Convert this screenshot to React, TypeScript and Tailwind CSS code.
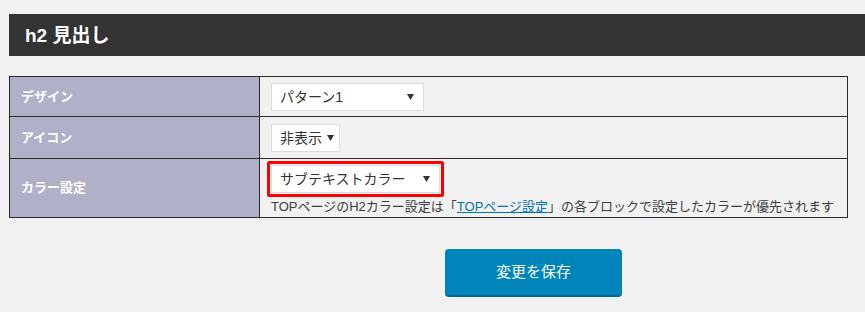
import React from "react";

interface FieldRow {
  label: string;
  height: string;
}

function Arrow() {
  return (
    <svg width="7" height="6" viewBox="0 0 7 6" className="shrink-0">
      <path d="M0 0 H7 L3.5 6 Z" fill="#333" />
    </svg>
  );
}

function FakeSelect({ value, className }: { value: string; className: string }) {
  return (
    <div
      className={`flex items-center justify-between h-[28px] bg-white border border-[#dcdcdc] pl-[8px] text-[14px] text-[#333] whitespace-nowrap ${className}`}
    >
      <span className="leading-none">{value}</span>
      <Arrow />
    </div>
  );
}

export default function App() {
  const rows: FieldRow[] = [
    { label: "デザイン", height: "h-[39px]" },
    { label: "アイコン", height: "h-[42px]" },
    { label: "カラー設定", height: "h-[59px]" },
  ];

  return (
    <div className="w-[865px] h-[312px] bg-[#f1f1f1] overflow-hidden pt-[14px] font-['Liberation_Sans','Noto_Sans_CJK_JP',sans-serif]">
      {/* heading bar */}
      <div className="ml-[9px] h-[42px] bg-[#333] flex items-center pl-[16px]">
        <h2 className="text-white font-bold text-[19px] leading-none">h2 見出し</h2>
      </div>

      {/* settings table */}
      <div className="ml-[9px] w-[839px] mt-[20px] border border-[#2b2b2b]">
        {rows.map((row, i) => (
          <div
            key={i}
            className={`flex ${row.height} ${i > 0 ? "border-t border-[#2b2b2b]" : ""}`}
          >
            <div className="w-[250px] bg-[#b0b0c8] border-r border-[#2b2b2b] flex items-center pl-[11px] text-white font-bold text-[13px]">
              {row.label}
            </div>
            <div className="flex-1 pl-[11px] flex flex-col justify-center">
              {i === 0 && <FakeSelect value="パターン1" className="w-[153px] pr-[9px]" />}
              {i === 1 && <FakeSelect value="非表示" className="w-[69px] pr-[6px] gap-[5px]" />}
              {i === 2 && (
                <div className="flex flex-col items-start -ml-[4px]">
                  <div className="border-[3px] border-[#f00] rounded-[2px] p-[1px]">
                    <FakeSelect value="サブテキストカラー" className="w-[169px] h-[26px] pr-[9px]" />
                  </div>
                  <p className="text-[13px] text-[#3c3c3c] leading-[18px] ml-[4px] mt-[1px]">
                    TOPページのH2カラー設定は「
                    <a className="text-[#0073aa] underline">TOPページ設定</a>
                    」の各ブロックで設定したカラーが優先されます
                  </p>
                </div>
              )}
            </div>
          </div>
        ))}
      </div>

      {/* submit */}
      <div className="ml-[445px] mt-[31px]">
        <button className="w-[177px] h-[48px] bg-[#0085ba] border-b-2 border-[#006799] rounded-[4px] text-white text-[15px]">
          変更を保存
        </button>
      </div>
    </div>
  );
}
